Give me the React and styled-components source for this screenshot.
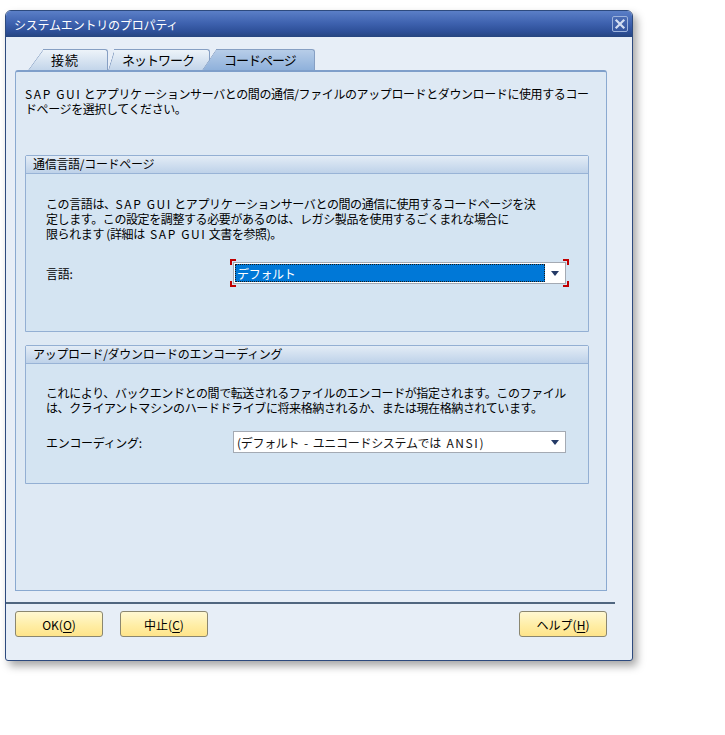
import React from 'react';
import styled, { createGlobalStyle } from 'styled-components';

const GlobalStyle = createGlobalStyle`
    html, body {
        margin: 0;
        padding: 0;
        background: #ffffff;
    }
    body {
        font-family: "Noto Sans CJK JP", sans-serif;
        font-size: 12px;
        color: #000000;
    }
`;

const Page = styled.div`
    padding: 10px 0 30px 5px;
`;

const Window = styled.div`
    width: 628px;
    height: 651px;
    box-sizing: border-box;
    border: 1px solid #2d4a7e;
    border-radius: 6px 6px 3px 3px;
    background: #e7eef7;
    box-shadow: 4px 5px 9px rgba(0, 0, 0, 0.35);
    display: flex;
    flex-direction: column;
    overflow: hidden;
`;

const TitleBar = styled.div`
    height: 26px;
    flex: none;
    display: flex;
    align-items: center;
    justify-content: space-between;
    padding: 0 4px 0 8px;
    background: linear-gradient(#5b7fc7 0%, #3f63b0 45%, #2d4f98 80%, #26457f 100%);
    color: #ffffff;
    font-size: 12px;
    letter-spacing: -0.2px;
`;

const Body = styled.div`
    padding: 11px 25px 0 9px;
    display: flex;
    flex-direction: column;
`;

const TabRow = styled.div`
    display: flex;
    align-items: flex-end;
    height: 22px;
    padding-left: 13px;
`;

const Tab = styled.div`
    position: relative;
    z-index: ${p => p.$z};
    width: ${p => p.$w}px;
    height: 21px;
    margin-left: ${p => p.$ml || 0}px;
    padding-left: ${p => p.$slant + 8}px;
    box-sizing: border-box;
    display: flex;
    align-items: center;
    font-size: 13px;
    letter-spacing: ${p => p.$ls || 0}px;
    white-space: nowrap;

    &::before,
    &::after {
        content: '';
        position: absolute;
        top: 0;
        bottom: 0;
        z-index: -1;
        border-top: 1px solid #869fc3;
        background: ${p => p.$active
            ? 'linear-gradient(#b7cde8, #8fb1db)'
            : 'linear-gradient(#edf3f9, #c3d5ea)'};
    }

    &::before {
        left: 0;
        width: ${p => p.$slant + 8}px;
        border-left: 1px solid #869fc3;
        border-top-left-radius: 2px;
        transform: skewX(-${p => p.$skew}deg);
        transform-origin: bottom left;
    }

    &::after {
        left: ${p => p.$slant}px;
        right: 0;
        border-right: 1px solid #869fc3;
        border-top-right-radius: 3px;
    }
`;

const Panel = styled.div`
    height: 521px;
    box-sizing: border-box;
    border: 1px solid #8aa9d0;
    border-top: 2px solid #7f9fca;
    border-radius: 3px 3px 0 0;
    background: #dee9f4;
    padding: 14px 0 0 9px;
`;

const Paragraph = styled.p`
    margin: 0;
    line-height: 15px;
    letter-spacing: -0.4px;
    white-space: nowrap;
`;

const Latin = styled.span`
    letter-spacing: 1.6px;
    margin-left: ${p => (p.$spaced ? 3 : 0)}px;
`;

const Group = styled.div`
    width: 564px;
    height: ${p => p.$h}px;
    margin-top: ${p => p.$mt}px;
    box-sizing: border-box;
    border: 1px solid #93afd3;
    border-radius: 2px 2px 0 0;
    background: #d4e4f2;
`;

const GroupHeader = styled.div`
    height: 17px;
    line-height: 16px;
    padding-left: 7px;
    border-bottom: 1px solid #98b3d6;
    background: linear-gradient(#e3ecf6, #bed2e9);
    letter-spacing: -0.3px;
    white-space: nowrap;
`;

const GroupBody = styled.div`
    padding: ${p => p.$pt}px 0 0 20px;
`;

const FieldRow = styled.div`
    display: grid;
    grid-template-columns: 187px 333px;
    align-items: center;
    margin-top: ${p => p.$mt}px;
    letter-spacing: -0.3px;
`;

const Select = styled.div`
    position: relative;
    height: 22px;
    box-sizing: border-box;
    border: 1px solid #a4aab3;
    background: #ffffff;
    display: flex;
    align-items: center;
    padding: 1px 0 1px 1px;

    ${p => p.$focused && `
        &::after {
            content: '';
            position: absolute;
            inset: -4px -4px -4px -4px;
            pointer-events: none;
            background:
                linear-gradient(#c00000, #c00000) left top / 6px 2px no-repeat,
                linear-gradient(#c00000, #c00000) left top / 2px 6px no-repeat,
                linear-gradient(#c00000, #c00000) right top / 6px 2px no-repeat,
                linear-gradient(#c00000, #c00000) right top / 2px 6px no-repeat,
                linear-gradient(#c00000, #c00000) left bottom / 6px 2px no-repeat,
                linear-gradient(#c00000, #c00000) left bottom / 2px 6px no-repeat,
                linear-gradient(#c00000, #c00000) right bottom / 6px 2px no-repeat,
                linear-gradient(#c00000, #c00000) right bottom / 2px 6px no-repeat;
        }
    `}
`;

const SelectValue = styled.div`
    flex: 1;
    height: 100%;
    box-sizing: border-box;
    display: flex;
    align-items: center;
    padding-left: 2px;
    white-space: pre;
    ${p => p.$selected ? `
        background: #0078d7;
        color: #ffffff;
        outline: 1px dotted #1a1a1a;
        outline-offset: -1px;
    ` : `
        color: #111111;
    `}
`;

const ArrowBox = styled.div`
    width: 20px;
    height: 100%;
    display: flex;
    align-items: center;
    justify-content: center;

    &::before {
        content: '';
        border-left: 4px solid transparent;
        border-right: 4px solid transparent;
        border-top: 5px solid #243a66;
    }
`;

const Separator = styled.div`
    height: 2px;
    margin: 11px 17px 0 0;
    background: #50667f;
`;

const ButtonBar = styled.div`
    display: flex;
    gap: 17px;
    padding: 7px 25px 0 9px;
`;

const Button = styled.div`
    width: 88px;
    height: 26px;
    box-sizing: border-box;
    border: 1px solid #8b8770;
    border-radius: 3px;
    background: linear-gradient(#fff8d2, #ffeea6 55%, #ffe48a);
    display: flex;
    align-items: center;
    justify-content: center;
    font-size: 12px;
    margin-left: ${p => (p.$push ? 'auto' : '0')};

    & u {
        text-decoration-thickness: 1px;
        text-underline-offset: 2px;
    }
`;

function CloseIcon() {
    return (
        <svg width="16" height="16" viewBox="0 0 16 16">
            <defs>
                <linearGradient id="cbg" x1="0" y1="0" x2="0" y2="1">
                    <stop offset="0" stopColor="#4b6db5" />
                    <stop offset="1" stopColor="#35569f" />
                </linearGradient>
            </defs>
            <rect x="0.5" y="0.5" width="15" height="15" rx="1.5" fill="url(#cbg)" stroke="#9db3dc" />
            <path d="M4.5 4.5 L11.5 11.5 M11.5 4.5 L4.5 11.5" stroke="#d3def2" strokeWidth="2.2" strokeLinecap="square" />
        </svg>
    );
}

export default function App() {
    return (
        <Page>
            <GlobalStyle />
            <Window>
                <TitleBar>
                    <span>システムエントリのプロパティ</span>
                    <CloseIcon />
                </TitleBar>
                <Body>
                    <TabRow>
                        <Tab $w={80} $slant={15} $skew={36} $z={2} $ls={1}>接続</Tab>
                        <Tab $w={102} $slant={6} $skew={17} $z={1} $ls={-1}>ネットワーク</Tab>
                        <Tab $w={113} $slant={14} $skew={34} $z={3} $ml={-8} $ls={-1} $active>コードページ</Tab>
                    </TabRow>
                    <Panel>
                        <Paragraph>
                            <Latin>SAP GUI</Latin> とアプリケ ーションサーバとの間の通信/ファイルのアップロードとダウンロードに使用するコー<br />
                            ドページを選択してください。
                        </Paragraph>
                        <Group $h={177} $mt={39}>
                            <GroupHeader>通信言語/コードページ</GroupHeader>
                            <GroupBody $pt={22}>
                                <Paragraph>
                                    この言語は、<Latin>SAP GUI</Latin> とアプリケ ーションサーバとの間の通信に使用するコードページを決<br />
                                    定します。この設定を調整する必要があるのは、レガシ製品を使用するごくまれな場合に<br />
                                    限られます (詳細は <Latin $spaced>SAP GUI</Latin> 文書を参照)。
                                </Paragraph>
                                <FieldRow $mt={21}>
                                    <span>言語:</span>
                                    <Select $focused>
                                        <SelectValue $selected>デフォルト</SelectValue>
                                        <ArrowBox />
                                    </Select>
                                </FieldRow>
                            </GroupBody>
                        </Group>
                        <Group $h={139} $mt={13}>
                            <GroupHeader>アップロード/ダウンロードのエンコーディング</GroupHeader>
                            <GroupBody $pt={21}>
                                <Paragraph>
                                    これにより、バックエンドとの間で転送されるファイルのエンコードが指定されます。このファイル<br />
                                    は、クライアントマシンのハードドライブに将来格納されるか、または現在格納されています。
                                </Paragraph>
                                <FieldRow $mt={16}>
                                    <span>エンコーディング:</span>
                                    <Select>
                                        <SelectValue>(デフォルト  -  ユニコードシステムでは <Latin $spaced>ANSI</Latin>)</SelectValue>
                                        <ArrowBox />
                                    </Select>
                                </FieldRow>
                            </GroupBody>
                        </Group>
                    </Panel>
                </Body>
                <Separator />
                <ButtonBar>
                    <Button>OK(<u>O</u>)</Button>
                    <Button>中止(<u>C</u>)</Button>
                    <Button $push>ヘルプ(<u>H</u>)</Button>
                </ButtonBar>
            </Window>
        </Page>
    );
}
